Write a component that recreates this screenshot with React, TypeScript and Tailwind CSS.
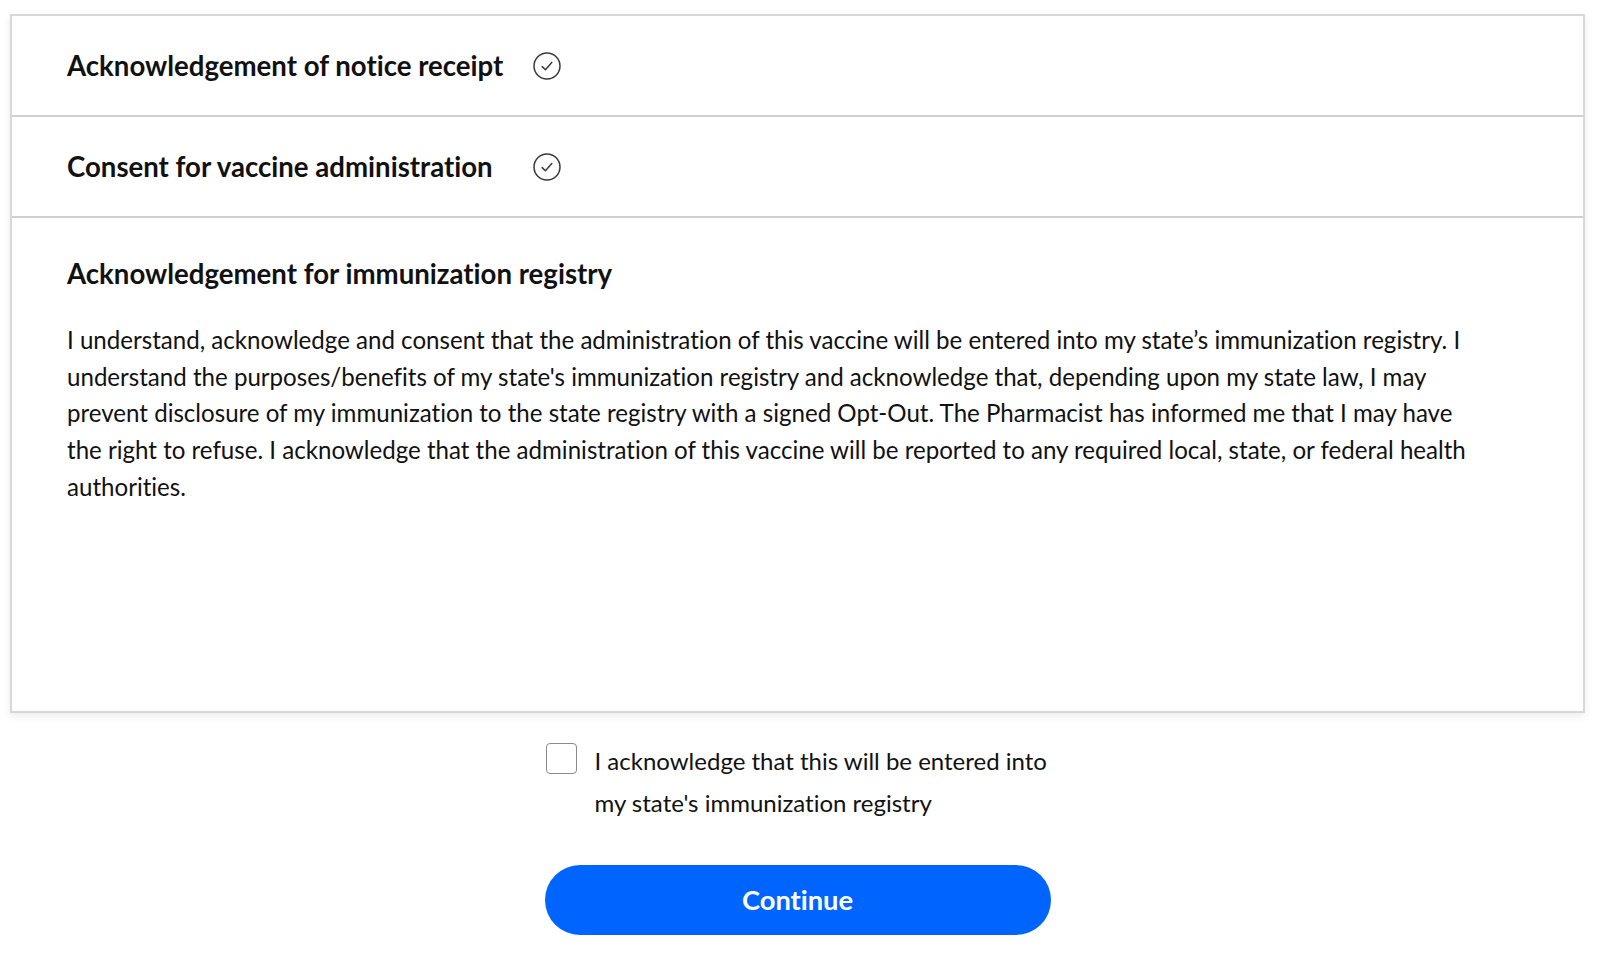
import React from "react";

const CheckCircle = () => (
  <svg width="28" height="28" viewBox="0 0 28 28" fill="none" className="shrink-0">
    <circle cx="14" cy="14" r="13" stroke="#3a3a3a" strokeWidth="1.5" />
    <path d="M9.2 14.6 L12.4 17.8 L18.8 10.6" stroke="#3a3a3a" strokeWidth="1.5" strokeLinecap="round" strokeLinejoin="round" />
  </svg>
);

const lines = [
  "I understand, acknowledge and consent that the administration of this vaccine will be entered into my state\u2019s immunization registry. I",
  "understand the purposes/benefits of my state's immunization registry and acknowledge that, depending upon my state law, I may",
  "prevent disclosure of my immunization to the state registry with a signed Opt-Out. The Pharmacist has informed me that I may have",
  "the right to refuse. I acknowledge that the administration of this vaccine will be reported to any required local, state, or federal health",
  "authorities.",
];

export default function App() {
  return (
    <div className="min-h-[966px] w-full bg-white pt-[14px] text-[#111] [font-variant-ligatures:none]" style={{ fontFamily: "Lato, 'Noto Sans', sans-serif" }}>
      <div className="ml-[10px] mr-[15px] border-[2px] border-[#d8d8d8] bg-white shadow-[0_3px_8px_rgba(0,0,0,0.08)]">
        <div className="flex h-[101px] items-center border-b-[2px] border-[#cfcfcf] px-[55px]">
          <span className="w-[466px] text-[27.6px] font-bold leading-[34px]">Acknowledgement of notice receipt</span>
          <CheckCircle />
        </div>
        <div className="flex h-[101px] items-center border-b-[2px] border-[#cfcfcf] px-[55px]">
          <span className="w-[466px] text-[27.6px] font-bold leading-[34px]">Consent for vaccine administration</span>
          <CheckCircle />
        </div>
        <div className="h-[493px] px-[55px] pt-[39px]">
          <h2 className="text-[27.6px] font-bold leading-[34px]">Acknowledgement for immunization registry</h2>
          <p className="mt-[31px] text-[24.1px] leading-[36.7px]">
            {lines.map((l, i) => (
              <span key={i} className="block whitespace-nowrap">{l}</span>
            ))}
          </p>
        </div>
      </div>
      <div className="ml-[10px] mr-[15px]">
        <div className="mx-auto mt-[26px] w-[506px] pl-[1px]">
          <label className="flex items-start gap-[18px]">
            <span className="mt-[4px] h-[31px] w-[31px] shrink-0 rounded-[4px] border-[1.5px] border-[#8a8a8a] bg-white" />
            <span className="pt-[1px] text-[24px] leading-[42px]">
              I acknowledge that this will be entered into
              <br />
              my state's immunization registry
            </span>
          </label>
          <button className="-ml-[1px] mt-[41px] flex h-[70px] w-[506px] items-center justify-center rounded-full bg-[#0065ff] text-[27.3px] font-bold text-white">
            Continue
          </button>
        </div>
      </div>
    </div>
  );
}
